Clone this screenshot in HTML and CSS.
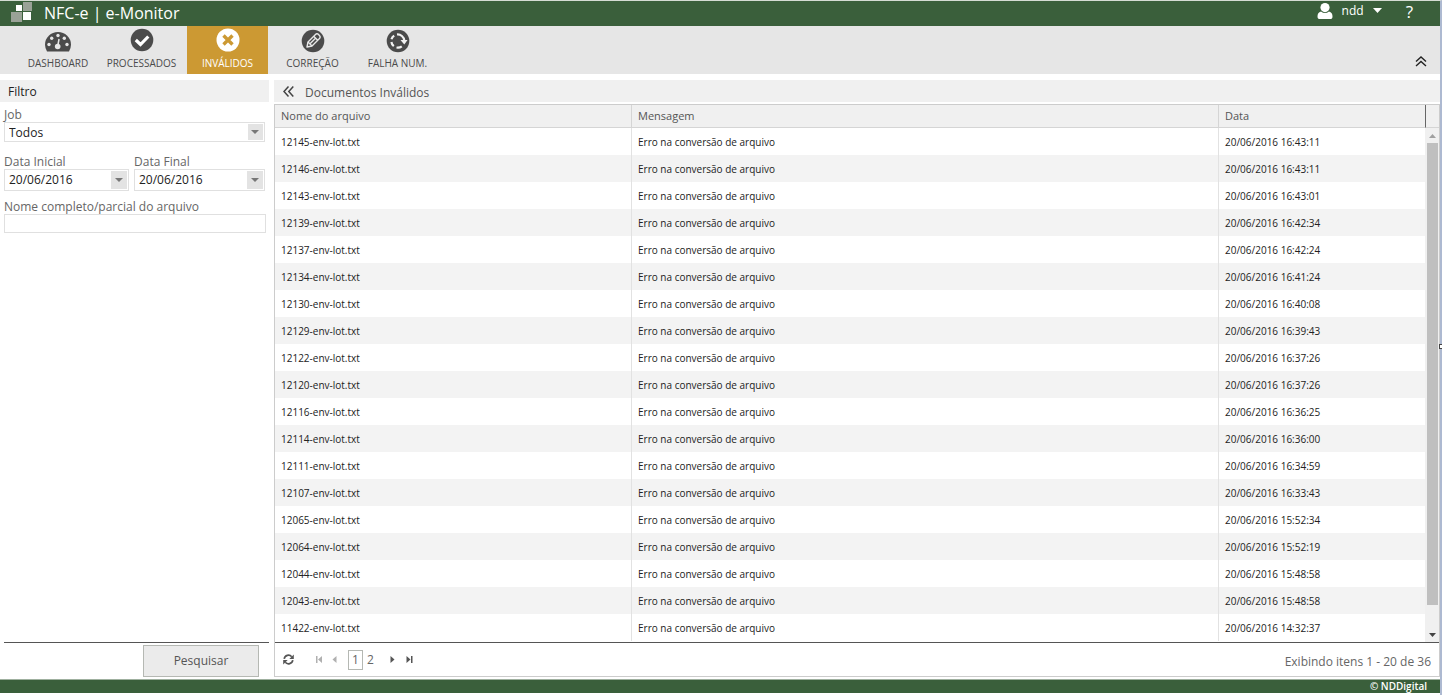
FILE: index.html
```html
<!DOCTYPE html>
<html lang="pt-BR">
<head>
<meta charset="utf-8">
<title>NFC-e | e-Monitor</title>
<link rel="stylesheet" href="styles.css">
</head>
<body>
<div class="app">
  <header class="topbar">
    <svg class="logo" width="22" height="20" viewBox="0 0 22 20" aria-hidden="true">
      <rect x="12" y="0" width="9" height="9" fill="#9aa297"/><rect x="0" y="10" width="11" height="10" fill="#9aa297"/>
      <rect x="5" y="3" width="6" height="6" fill="#fff"/><rect x="12" y="10" width="8" height="8" fill="#fff"/>
    </svg>
    <h1 class="brand">NFC-e | e-Monitor</h1>
    <button class="user">
      <svg width="16" height="16" viewBox="0 0 16 16" fill="#fff" aria-hidden="true"><ellipse cx="8" cy="4.6" rx="4.6" ry="4.6"/><path d="M4 8.4Q8 11.5 12 8.4Q15.6 9.4 15.5 13.4Q15.5 16 13 16H3Q.5 16 .5 13.4Q.4 9.4 4 8.4Z"/></svg>
      <span>ndd</span>
      <svg width="9" height="5" viewBox="0 0 9 5" fill="#fff" aria-hidden="true"><path d="M0 0H9L4.500 5Z"/></svg>
    </button>
    <button class="help">?</button>
  </header>

  <nav class="ribbon">
    <button class="tab">
      <svg width="28" height="24" viewBox="0 0 28 24" aria-hidden="true"><path d="M3 22.500Q1 19 1 15.500A13 12.500 0 0 1 27 15.500Q27 19 25 22.500Z" fill="#4b4b4b"/><g fill="#e6e6e6"><circle cx="5" cy="15.500" r="1.700"/><circle cx="7.700" cy="9.300" r="1.700"/><circle cx="14" cy="6.500" r="1.700"/><circle cx="20.300" cy="9.300" r="1.700"/><circle cx="23" cy="15.500" r="1.700"/><circle cx="13.700" cy="17.500" r="2.800"/></g><path d="M13.700 17.500L15 10" stroke="#e6e6e6" stroke-width="1.500"/></svg>
      <span>DASHBOARD</span>
    </button>
    <button class="tab">
      <svg width="24" height="24" viewBox="0 0 24 24" aria-hidden="true"><circle cx="12" cy="12" r="11.300" fill="#4b4b4b"/><path d="M5.800 12L10.500 16.500L18.300 8.500" fill="none" stroke="#fff" stroke-width="3.200"/></svg>
      <span>PROCESSADOS</span>
    </button>
    <button class="tab tab-active">
      <svg width="24" height="24" viewBox="0 0 24 24" aria-hidden="true"><circle cx="12" cy="12" r="11.500" fill="#fff"/><path d="M7.500 7.500L16.500 16.500M16.500 7.500L7.500 16.500" stroke="#cc9933" stroke-width="3.400"/></svg>
      <span>INVÁLIDOS</span>
    </button>
    <button class="tab">
      <svg width="24" height="24" viewBox="0 0 24 24" aria-hidden="true"><circle cx="12" cy="12" r="11.300" fill="#4b4b4b"/><g fill="none" stroke="#e8e8e8" stroke-width="1.400" stroke-linejoin="round"><path d="M6 18L7 13L14.500 5.500Q16 4 18 6Q20 8 18.500 9.500L11 17Z"/><path d="M7 13L11 17M12.700 7.300L16.700 11.300M9 14.800L15 8.800"/></g></svg>
      <span>CORREÇÃO</span>
    </button>
    <button class="tab">
      <svg width="24" height="24" viewBox="0 0 24 24" aria-hidden="true"><circle cx="12" cy="12" r="11.300" fill="#4b4b4b"/><g fill="none" stroke="#f2f2f2" stroke-width="2.200"><path d="M11 5.500A6.700 6.700 0 0 1 18.300 11.500"/><path d="M15.800 17.300A6.700 6.700 0 0 1 10.500 18.500"/><path d="M7.800 17.200A6.700 6.700 0 0 1 5.400 13"/><path d="M5.500 10.300A6.700 6.700 0 0 1 8.200 6.600"/></g><path d="M14.500 11H21.500L18.300 15.500Z" fill="#f2f2f2"/></svg>
      <span>FALHA NUM.</span>
    </button>
    <button class="collapse" aria-label="Recolher">
      <svg width="12" height="11" viewBox="0 0 12 11" fill="none" stroke="#222" stroke-width="1.400" aria-hidden="true"><path d="M1 5.500L6 1L11 5.500M1 10L6 5.500L11 10"/></svg>
    </button>
  </nav>

  <main class="work">
    <form class="filter">
      <h2 class="bar filter-title">Filtro</h2>
      <div class="fields">
        <div class="field job">
          <label for="job">Job</label>
          <div class="pick"><select id="job"><option>Todos</option></select></div>
        </div>
        <div class="dates">
          <div class="field">
            <label for="from">Data Inicial</label>
            <div class="pick"><input id="from" type="text" value="20/06/2016"><button type="button" class="drop" aria-label="Abrir"></button></div>
          </div>
          <div class="field">
            <label for="to">Data Final</label>
            <div class="pick"><input id="to" type="text" value="20/06/2016"><button type="button" class="drop" aria-label="Abrir"></button></div>
          </div>
        </div>
        <div class="field">
          <label for="name">Nome completo/parcial do arquivo</label>
          <input id="name" class="name" type="text">
        </div>
      </div>
      <div class="actions"><button type="button" class="search">Pesquisar</button></div>
    </form>

    <section class="docs">
      <div class="bar docs-title">
        <button class="back" aria-label="Ocultar filtro"><svg width="11" height="11" viewBox="0 0 11 11" fill="none" stroke="#444" stroke-width="1.500" aria-hidden="true"><path d="M5.500 .5L1 5.500L5.500 10.500M10.300 .5L5.800 5.500L10.300 10.500"/></svg></button>
        <h2>Documentos Inválidos</h2>
      </div>
      <div class="grid">
        <div class="grid-body">
          <table>
            <colgroup><col class="c-name"><col><col class="c-date"></colgroup>
            <thead><tr><th>Nome do arquivo</th><th>Mensagem</th><th>Data</th></tr></thead>
            <tbody>
              <tr><td>12145-env-lot.txt</td><td>Erro na conversão de arquivo</td><td>20/06/2016 16:43:11</td></tr>
              <tr><td>12146-env-lot.txt</td><td>Erro na conversão de arquivo</td><td>20/06/2016 16:43:11</td></tr>
              <tr><td>12143-env-lot.txt</td><td>Erro na conversão de arquivo</td><td>20/06/2016 16:43:01</td></tr>
              <tr><td>12139-env-lot.txt</td><td>Erro na conversão de arquivo</td><td>20/06/2016 16:42:34</td></tr>
              <tr><td>12137-env-lot.txt</td><td>Erro na conversão de arquivo</td><td>20/06/2016 16:42:24</td></tr>
              <tr><td>12134-env-lot.txt</td><td>Erro na conversão de arquivo</td><td>20/06/2016 16:41:24</td></tr>
              <tr><td>12130-env-lot.txt</td><td>Erro na conversão de arquivo</td><td>20/06/2016 16:40:08</td></tr>
              <tr><td>12129-env-lot.txt</td><td>Erro na conversão de arquivo</td><td>20/06/2016 16:39:43</td></tr>
              <tr><td>12122-env-lot.txt</td><td>Erro na conversão de arquivo</td><td>20/06/2016 16:37:26</td></tr>
              <tr><td>12120-env-lot.txt</td><td>Erro na conversão de arquivo</td><td>20/06/2016 16:37:26</td></tr>
              <tr><td>12116-env-lot.txt</td><td>Erro na conversão de arquivo</td><td>20/06/2016 16:36:25</td></tr>
              <tr><td>12114-env-lot.txt</td><td>Erro na conversão de arquivo</td><td>20/06/2016 16:36:00</td></tr>
              <tr><td>12111-env-lot.txt</td><td>Erro na conversão de arquivo</td><td>20/06/2016 16:34:59</td></tr>
              <tr><td>12107-env-lot.txt</td><td>Erro na conversão de arquivo</td><td>20/06/2016 16:33:43</td></tr>
              <tr><td>12065-env-lot.txt</td><td>Erro na conversão de arquivo</td><td>20/06/2016 15:52:34</td></tr>
              <tr><td>12064-env-lot.txt</td><td>Erro na conversão de arquivo</td><td>20/06/2016 15:52:19</td></tr>
              <tr><td>12044-env-lot.txt</td><td>Erro na conversão de arquivo</td><td>20/06/2016 15:48:58</td></tr>
              <tr><td>12043-env-lot.txt</td><td>Erro na conversão de arquivo</td><td>20/06/2016 15:48:58</td></tr>
              <tr><td>11422-env-lot.txt</td><td>Erro na conversão de arquivo</td><td>20/06/2016 14:32:37</td></tr>
            </tbody>
          </table>
          <div class="side">
            <div class="side-head"></div>
            <div class="scroll">
              <svg width="7" height="4" viewBox="0 0 7 4" fill="#a0a0a0" aria-hidden="true"><path d="M0 4L3.500 0L7 4Z"/></svg>
              <div class="thumb"></div>
              <svg width="7" height="4" viewBox="0 0 7 4" fill="#444" aria-hidden="true"><path d="M0 0H7L3.500 4Z"/></svg>
            </div>
          </div>
        </div>
        <div class="pager">
          <button class="refresh" aria-label="Atualizar"><svg width="11" height="11" viewBox="0 0 11 11" aria-hidden="true"><g fill="none" stroke="#555" stroke-width="1.700"><path d="M1.200 4.800A4.300 4.300 0 0 1 8.700 2.700"/><path d="M9.800 6.200A4.300 4.300 0 0 1 2.300 8.300"/></g><path d="M10.800 .5V5H6.300ZM.2 10.500V6H4.700Z" fill="#555"/></svg></button>
          <button aria-label="Primeira"><svg width="7" height="7" viewBox="0 0 7 7" fill="#b0b0b0" aria-hidden="true"><path d="M0 0H1.500V7H0ZM6 0V7L2 3.500Z"/></svg></button>
          <button class="prev" aria-label="Anterior"><svg width="5" height="7" viewBox="0 0 5 7" fill="#b0b0b0" aria-hidden="true"><path d="M4.500 0V7L.5 3.500Z"/></svg></button>
          <button class="page page-on">1</button>
          <button class="page">2</button>
          <button class="next" aria-label="Próxima"><svg width="5" height="7" viewBox="0 0 5 7" fill="#555" aria-hidden="true"><path d="M.5 0V7L4.500 3.500Z"/></svg></button>
          <button aria-label="Última"><svg width="7" height="7" viewBox="0 0 7 7" fill="#555" aria-hidden="true"><path d="M5 0H6.500V7H5ZM.5 0V7L4.500 3.500Z"/></svg></button>
          <span class="count">Exibindo itens 1 - 20 de 36</span>
        </div>
      </div>
    </section>
  </main>

  <footer class="foot">© NDDigital</footer>
  <span class="grip"></span>
</div>
</body>
</html>
```

FILE: styles.css
```css
* { box-sizing: border-box; }
body {
  margin: 0;
  background: #fff;
  color: #222;
  font: 12px/16px "Segoe UI", "Open Sans", "Noto Sans", sans-serif;
}
button, input, select { font: inherit; color: inherit; }
button { border: 0; padding: 0; background: none; cursor: pointer; }
h1, h2 { margin: 0; font-weight: 400; }
svg { display: block; flex: none; }

.app {
  position: relative;
  display: flex;
  flex-direction: column;
  min-height: 100vh;
  border-top: 1px solid #d5dcd3;
  border-right: 2px solid #adb9d1;
}

.topbar {
  display: flex;
  align-items: center;
  height: 25px;
  padding: 0 27px 0 11px;
  background: #3a5f3b;
  color: #fff;
}
.logo { margin-bottom: 3px; }
.brand { flex: 1; margin-left: 11px; padding-bottom: 2px; font-size: 16px; line-height: 22px; }
.user { display: flex; align-items: center; gap: 9px; padding-bottom: 6px; }
.help { margin-left: 24px; padding-bottom: 4px; font-size: 17px; line-height: 20px; }

.ribbon {
  display: flex;
  height: 48px;
  padding-left: 16px;
  background: #e6e6e6;
}
.tab {
  display: flex;
  flex-direction: column;
  align-items: center;
  justify-content: space-between;
  width: 84px;
  padding: 3px 0;
  color: #4b4b4b;
  font-size: 10px;
}
.tab:nth-child(2) { width: 83px; margin-right: 4px; }
.tab:nth-child(2), .tab-active { padding-top: 2px; }
.tab-active { width: 81px; background: #cc9933; color: #fff; }
.tab:nth-child(4) { width: 89px; }
.tab:nth-child(5) { width: 81px; }
.collapse { margin: auto 13px 7px auto; }

.work { flex: 1; display: flex; gap: 5px; padding-top: 6px; }
.bar { display: flex; align-items: center; height: 22px; background: #f0f0f0; }

.filter { display: flex; flex-direction: column; width: 269px; }
.filter-title { padding: 1px 0 0 8px; font-size: 12px; }
.fields { flex: 1; padding: 5px 3px 0 4px; color: #666; }
.field { display: flex; flex-direction: column; }
.field label { line-height: 15px; }
.job { margin: 0 1px 12px 0; }
.dates { display: grid; grid-template-columns: 125fr 131fr; gap: 5px; margin: 0 1px 8px 0; }
.field input, .field select { min-width: 0; width: 100%; border: 0; padding: 0 3px; color: #222; background: none; outline: 0; }
.pick { display: flex; align-items: center; height: 20px; border: 1px solid #e0e0e0; padding: 1px; }
.pick select {
  height: 16px;
  appearance: none;
  background: linear-gradient(#e3e3e3, #e3e3e3) right / 15px 100% no-repeat;
}
.job .pick { position: relative; }
.job select { padding-top: 1px; }
.dates .pick { height: 22px; }
.drop { display: flex; align-items: center; justify-content: center; flex: none; width: 16px; height: 18px; background: #e3e3e3; }
.drop::before, .job .pick::after {
  content: "";
  border: 4px solid transparent;
  border-top-color: #777;
  border-bottom: 0;
}
.job .pick::after { position: absolute; right: 5px; top: 7px; pointer-events: none; }
.field .name { height: 19px; border: 1px solid #e0e0e0; }
.actions { display: flex; justify-content: flex-end; height: 35px; margin-left: 4px; padding: 2px 10px 0 0; border-top: 1px solid #555; }
.search { width: 116px; height: 32px; border: 1px solid #b5b8b3; background: #ebebeb; color: #555; }

.docs { flex: 1; display: flex; flex-direction: column; min-width: 0; }
.docs-title { gap: 11px; padding-left: 9px; color: #555; }
.docs-title h2 { padding-top: 3px; font-size: 12px; }
.grid { flex: 1; display: flex; flex-direction: column; margin-top: 2px; border: 1px solid #ccc; }
.grid-body { flex: 1; display: flex; align-items: flex-start; }
table { flex: 1; table-layout: fixed; border-collapse: separate; border-spacing: 0; }
.c-name { width: 356px; }
.c-date { width: 207px; }
th, td { padding: 0 6px; text-align: left; border-left: 1px solid #e2e2e2; }
th:first-child, td:first-child { border-left: 0; }
th { height: 23px; background: #f0f0f0; border-bottom: 1px solid #d5d5d5; border-left-color: #d5d5d5; color: #555; font-size: 11px; font-weight: 400; }
td { height: 27px; font-size: 10px; }
tbody tr:nth-child(even) { background: #f3f3f3; }
.side { display: flex; flex-direction: column; align-self: stretch; width: 14px; }
.side-head { height: 23px; background: #f0f0f0; border-left: 1px solid #666; border-bottom: 1px solid #d5d5d5; }
.scroll { flex: 1; display: flex; flex-direction: column; align-items: center; gap: 5px; padding: 6px 0 5px; background: #f0f0f0; }
.thumb { width: 11px; flex: 1; margin-bottom: 23px; background: #bfbfbf; }

.pager { display: flex; align-items: center; height: 34px; padding: 0 8px; border-top: 1px solid #555; color: #666; }
.refresh { margin-right: 22px; }
.prev { margin: 0 11px 0 9px; }
.page { width: 15px; height: 20px; }
.page-on { border: 1px solid #b5b8b3; }
.next { margin: 0 11px 0 12px; }
.count { margin-left: auto; padding-top: 5px; }

.foot {
  margin: 2px 0;
  padding-right: 13px;
  border-top: 1px solid #9fb09f;
  background: #3a5f3b;
  color: #fff;
  font-size: 10px;
  font-weight: 600;
  line-height: 13px;
  text-align: right;
}
.grip { position: absolute; right: -4px; top: 343px; width: 5px; height: 5px; border: 1px solid #444; background: #fff; }
```
